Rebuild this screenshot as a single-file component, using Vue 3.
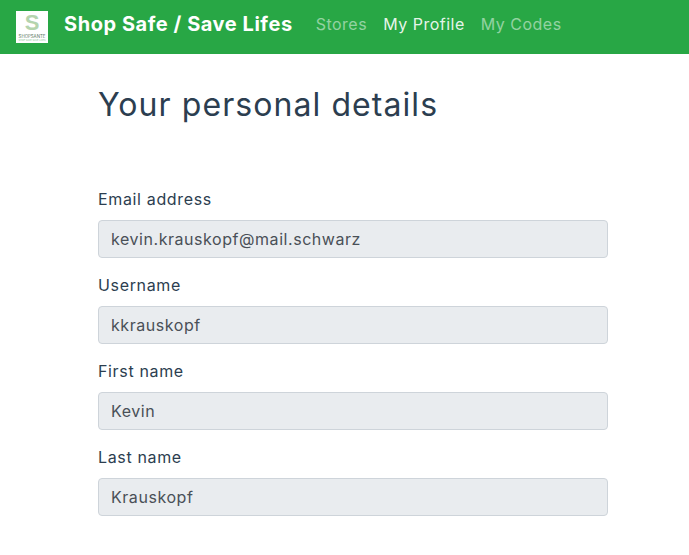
<script setup>
const links = [
  { label: 'Stores', active: false },
  { label: 'My Profile', active: true },
  { label: 'My Codes', active: false },
]
const fields = [
  { label: 'Email address', value: 'kevin.krauskopf@mail.schwarz' },
  { label: 'Username', value: 'kkrauskopf' },
  { label: 'First name', value: 'Kevin' },
  { label: 'Last name', value: 'Krauskopf' },
]
</script>

<template>
  <div class="page">
    <nav class="navbar">
      <div class="logo">
        <span class="logo-s">S</span>
        <span class="logo-name">SHOPSANTE</span>
        <span class="logo-sub">SHOP SAFE SAVE LIFES</span>
      </div>
      <div class="nav-text">
        <span class="brand">Shop Safe / Save Lifes</span>
        <a v-for="l in links" :key="l.label" class="nav-link" :class="{ active: l.active }">{{ l.label }}</a>
      </div>
    </nav>
    <main class="content">
      <h1 class="title">Your personal details</h1>
      <form class="form">
        <div v-for="f in fields" :key="f.label" class="group">
          <label class="label">{{ f.label }}</label>
          <div class="input">{{ f.value }}</div>
        </div>
      </form>
    </main>
  </div>
</template>

<style scoped>
.page {
  width: 689px;
  height: 555px;
  overflow: hidden;
  background: #fff;
  font-family: Inter, "Noto Sans", sans-serif;
  color: #2c3e50;
}
.navbar {
  height: 54px;
  background: #28a745;
  display: flex;
  align-items: center;
  padding-left: 16px;
  box-sizing: border-box;
}
.logo {
  width: 32px;
  height: 32px;
  padding-top: 1px;
  box-sizing: border-box;
  background: #fff;
  display: flex;
  flex-direction: column;
  align-items: center;
  margin-right: 16px;
  flex: none;
}
.logo-s {
  font-family: "Liberation Sans", sans-serif;
  font-weight: 700;
  font-size: 22px;
  line-height: 22px;
  height: 22px;
  color: #b4d4ae;
}
.logo-name {
  font-size: 4.4px;
  line-height: 5px;
  color: #5c7a63;
  white-space: nowrap;
}
.logo-sub {
  font-size: 2.4px;
  line-height: 4px;
  color: #8cc79a;
  white-space: nowrap;
}
.nav-text {
  display: flex;
  align-items: center;
  padding-bottom: 6px;
}
.brand {
  color: #fff;
  font-weight: 700;
  font-size: 20px;
  letter-spacing: 0.55px;
  margin-right: 23px;
  white-space: nowrap;
}
.nav-link {
  color: rgba(255, 255, 255, 0.5);
  font-size: 16px;
  letter-spacing: 0.5px;
  margin-right: 16px;
  white-space: nowrap;
}
.nav-link.active {
  color: rgba(255, 255, 255, 0.9);
}
.content {
  padding: 0 81px 0 98px;
}
.title {
  margin: 0;
  padding-top: 30px;
  font-size: 32px;
  line-height: 42px;
  font-weight: 400;
  letter-spacing: 1.07px;
}
.form {
  padding-top: 61px;
  display: flex;
  flex-direction: column;
  gap: 15px;
}
.group {
  display: flex;
  flex-direction: column;
  gap: 9px;
}
.label {
  font-size: 16px;
  line-height: 24px;
  letter-spacing: 0.65px;
}
.input {
  height: 38px;
  box-sizing: border-box;
  padding: 0 12px;
  background: #e9ecef;
  border: 1px solid #ced4da;
  border-radius: 4px;
  color: #495057;
  font-size: 16px;
  letter-spacing: 0.55px;
  line-height: 36px;
}
</style>
